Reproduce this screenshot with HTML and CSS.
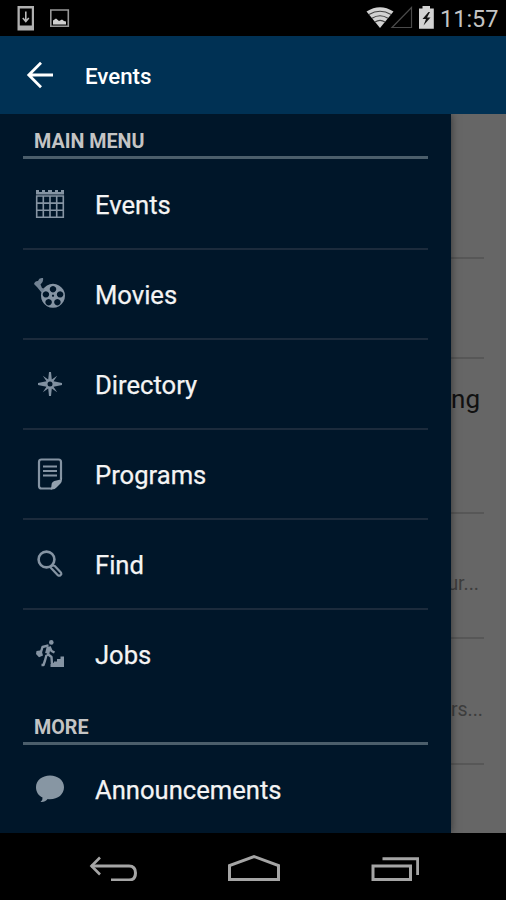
FILE: index.html
```
<!DOCTYPE html>
<html lang="en">
<head>
    <meta charset="utf-8">
    <title>Events</title>
    <link rel="stylesheet" href="styles.css">
</head>
<body>
    <div class="statusbar">
        <svg class="notifications" width="60" height="36" viewBox="0 0 60 36">
            <path fill="#b0b0b0" fill-rule="evenodd" d="M.5 6H17v24.500H.5zM2.800 8.500v17h12v-17z"/>
            <path fill="none" stroke="#b8b8b8" stroke-width="1.600" d="M8.800 11.500v9M5.800 18l3 3.500 3-3.500"/>
            <path fill="none" stroke="#989898" stroke-width="1.600" d="M33.800 10h17.500v16.200H33.800z"/>
            <path fill="#cfcfcf" d="M36 24.500v-4l3-2 3 2.500 3-1.500 2 1.500 2 .5v3z"/>
        </svg>
        <svg class="signals" width="74" height="36" viewBox="0 0 74 36">
            <path fill="#d2d2d2" d="M.5 11.500Q14 3 27.500 11.500L14 28z"/>
            <g fill="none" stroke="#444" stroke-width="1.100">
                <path d="M3 14.500q11-6.500 22 0M6 18.300q8-5 16 0M9 22q5-3.300 10 0"/>
            </g>
            <path fill="none" stroke="#4a4a4a" stroke-width="1.200" d="M45.500 7.500v20H26z"/>
            <path fill="#d2d2d2" d="M53 8.500h3.500V6h7.500v2.500h3.800v20.300H53z"/>
            <path fill="#111" d="M62.500 12l-6 7h3.500l-2.500 6.500 7-8h-3.500l3-5.500z"/>
        </svg>
        <span class="clock">11:57</span>
    </div>

    <div class="appbar">
        <svg class="back" width="28" height="28" viewBox="0 0 28 28">
            <path fill="none" stroke="#fff" stroke-width="2.800" d="M28 14H4M16 1.800L3.800 14 16 26.200"/>
        </svg>
        <h1>Events</h1>
    </div>

    <div class="content">
        <!-- event list, dimmed behind the drawer -->
        <div class="page">
            <div class="event event-1"></div>
            <div class="event event-2"></div>
            <div class="event event-3"><span class="name">ng</span></div>
            <div class="event event-4"><span class="place">ur...</span></div>
            <div class="event event-5"><span class="place">rs...</span></div>
        </div>

        <div class="drawer">
            <h2>MAIN MENU</h2>
            <div class="item first">
                <svg class="icon" viewBox="0 0 32 32">
                    <path fill="#8594a3" d="M2 2h3v2h3V2h3v2h3V2h4v2h3V2h3v2h3V2h3v4.500H2z"/>
                    <path fill="none" stroke="#8594a3" stroke-width="1.600" d="M2.700 8h26.600v21.300H2.700zM2.700 15.100h26.600M2.700 22.200h26.600M9.300 8v21.300M16 8v21.300M22.700 8v21.300"/>
                </svg>
                <span>Events</span>
            </div>
            <div class="item">
                <svg class="icon" viewBox="0 0 32 32">
                    <path fill="#8594a3" fill-rule="evenodd" d="M19 5.800a12 12 0 1 1-.01 0z
                        M19 8a3.200 3.200 0 1 0 .01 0zM11.900 13.200a3.200 3.200 0 1 0 .01 0zM26.100 13.200a3.200 3.200 0 1 0 .01 0z
                        M14.600 21a3.200 3.200 0 1 0 .01 0zM23.400 21a3.200 3.200 0 1 0 .01 0zM19 16.600a1.100 1.100 0 1 0 .01 0z"/>
                    <path fill="#718293" d="M0 6Q1 2.800 4 3q1-3.300 5-3 .8 4-2.500 6.500L8 10l3 1-3.500 3.500L3 9z"/>
                </svg>
                <span>Movies</span>
            </div>
            <div class="item">
                <svg class="icon" viewBox="0 0 32 32">
                    <path fill="#8090a0" d="M15 4h2l.8 7.500 5.400-3.700-3.700 5.400 8.500 1.800v2l-8.500 1.800 3.700 5.400-5.400-3.700L17 28h-2l-.8-7.500-5.400 3.700 3.700-5.400L4 17v-2l8.500-1.800-3.700-5.400 5.400 3.700z"/>
                    <circle cx="16" cy="16" r="2.500" fill="#001629"/>
                </svg>
                <span>Directory</span>
            </div>
            <div class="item">
                <svg class="icon" viewBox="0 0 32 32">
                    <path fill="none" stroke="#8594a3" stroke-width="2.200" d="M18 30.500H7.500Q5 30.500 5 28V4q0-2.500 2.500-2.500h17Q27 1.500 27 4v17"/>
                    <path fill="#93a1ae" d="M28 19v2.500q0 2-1.500 4l-4 4Q21 31.500 18 31.500h-1.500q1-2 1-4.500 0-4 5-4.500Q27 22 28 19z"/>
                    <path stroke="#8594a3" stroke-width="2.200" d="M9 8.500h14M9 13h14M9 17.500h14"/>
                </svg>
                <span>Programs</span>
            </div>
            <div class="item">
                <svg class="icon" viewBox="0 0 32 32">
                    <circle cx="12.500" cy="11.500" r="7.900" fill="none" stroke="#8594a3" stroke-width="2.600"/>
                    <path fill="none" stroke="#8594a3" stroke-width="2.200" stroke-linejoin="round" d="M16.500 19.300l2-2 2.300.7 6.300 6.800q.8 1.200-.5 2.300-1.300 1.100-2.500.3L17.500 20.500z"/>
                </svg>
                <span>Find</span>
            </div>
            <div class="item last">
                <svg class="icon" viewBox="0 0 32 32">
                    <circle cx="17.300" cy="4.400" r="2.300" fill="#8594a3"/>
                    <path fill="none" stroke="#8594a3" stroke-width="4.200" stroke-linejoin="round" d="M14.800 9l-1.600 6.500"/>
                    <path fill="none" stroke="#8594a3" stroke-width="2.400" stroke-linejoin="round" d="M14.500 7.300l-6 1.700L7 14M15.500 8.500l2 4.500 3 1.500M13 15.500l4.500 3.500.5 7h2M12.500 17l-1.500 5.500-1.500 4.500H7.500"/>
                    <path fill="#8594a3" d="M2.500 13l5-.8 1.500 5.300-4 1.800-3-3.300zM16.500 29v-3h3.500v-2.500h3V21h3.500v-2.500H30V29z"/>
                </svg>
                <span>Jobs</span>
            </div>
            <h2>MORE</h2>
            <div class="item last">
                <svg class="icon" viewBox="0 0 32 32">
                    <path fill="#8796a3" d="M16 2.500c8 0 14 5 14 11.700 0 7-6 12-14 12-1 0-1.500 0-2.300-.2Q11 29.500 6.500 29q2.500-2 2-4.500C4.500 22.500 2 19 2 14.200 2 7.500 8 2.500 16 2.500z"/>
                </svg>
                <span>Announcements</span>
            </div>
        </div>
    </div>

    <div class="navbar">
        <svg width="330" height="28" viewBox="0 0 330 28">
            <g fill="none" stroke="#a5a5a5" stroke-width="3">
                <path d="M2 13h38q6.500 0 6.500 7t-6.500 7H22"/>
                <path stroke-width="2.600" d="M11 4.500L2.500 13l8.500 8.500"/>
                <path d="M140.500 26.500V12.500L165 3.500l24.500 9v14z"/>
                <path d="M284 13h37.500v13.500H284z"/>
                <path d="M293.500 5.800h35.200V22"/>
            </g>
        </svg>
    </div>
</body>
</html>
```

FILE: styles.css
```
* {
    box-sizing: border-box;
}

body {
    margin: 0;
    height: 900px;
    display: flex;
    flex-direction: column;
    overflow: hidden;
    background: #000;
    font-family: Roboto, "Liberation Sans", sans-serif;
}

h1, h2 {
    margin: 0;
}

.statusbar {
    height: 36px;
    flex: none;
    display: flex;
    align-items: center;
    padding: 0 8px 0 17px;
}

.signals {
    margin-left: auto;
}

.clock {
    width: 58px;
    text-align: right;
    font-size: 23.5px;
    line-height: 36px;
    white-space: nowrap;
    color: #c4c4c4;
    padding-top: 1px;
}

.appbar {
    height: 78px;
    flex: none;
    display: flex;
    align-items: center;
    padding-left: 25px;
    background: #003154;
    color: #fff;
}

.appbar h1 {
    margin-left: 32px;
    padding-top: 1px;
    font-size: 22.3px;
    font-weight: 500;
}

.content {
    position: relative;
    height: 719px;
    flex: none;
    overflow: hidden;
    background: #666;
}

.page {
    padding-right: 22px;
}

.event {
    border-bottom: 2px solid #575757;
    text-align: right;
}

.event-1 { height: 145px; }
.event-2 { height: 100px; }
.event-3 { height: 155px; padding: 24px 4px 0 0; }
.event-4 { height: 125px; padding: 58px 5px 0 0; }
.event-5 { height: 126px; padding: 59px 1px 0 0; }

.name {
    font-size: 26px;
    line-height: 32px;
    color: #111;
}

.place {
    display: block;
    font-size: 19.5px;
    line-height: 24px;
    color: #3d3d3d;
}

/* the drawer slides over the event list */
.drawer {
    position: absolute;
    top: 0;
    left: 0;
    width: 451px;
    height: 100%;
    padding: 0 23px;
    background: #001629;
    box-shadow: 0 0 8px rgba(0, 0, 0, .5);
}

.drawer h2 {
    height: 45px;
    padding: 16px 0 0 11px;
    border-bottom: 3px solid #4b5e6b;
    font-size: 19.7px;
    line-height: 23px;
    font-weight: 700;
    color: #c4c4c4;
}

.item {
    height: 90px;
    display: flex;
    align-items: center;
    padding-left: 11px;
    border-bottom: 2px solid #1c2b3c;
    font-size: 25.6px;
    color: #f4f4f4;
}

.item.first {
    margin-top: 1px;
}

.item.last {
    border-bottom-color: transparent;
}

.item span {
    padding-top: 2px;
    -webkit-text-stroke: .25px #f4f4f4;
}

.icon {
    width: 32px;
    height: 32px;
    margin-right: 29px;
}

.navbar {
    height: 67px;
    flex: none;
    display: flex;
    justify-content: center;
    align-items: center;
    padding-left: 2px;
}
```
